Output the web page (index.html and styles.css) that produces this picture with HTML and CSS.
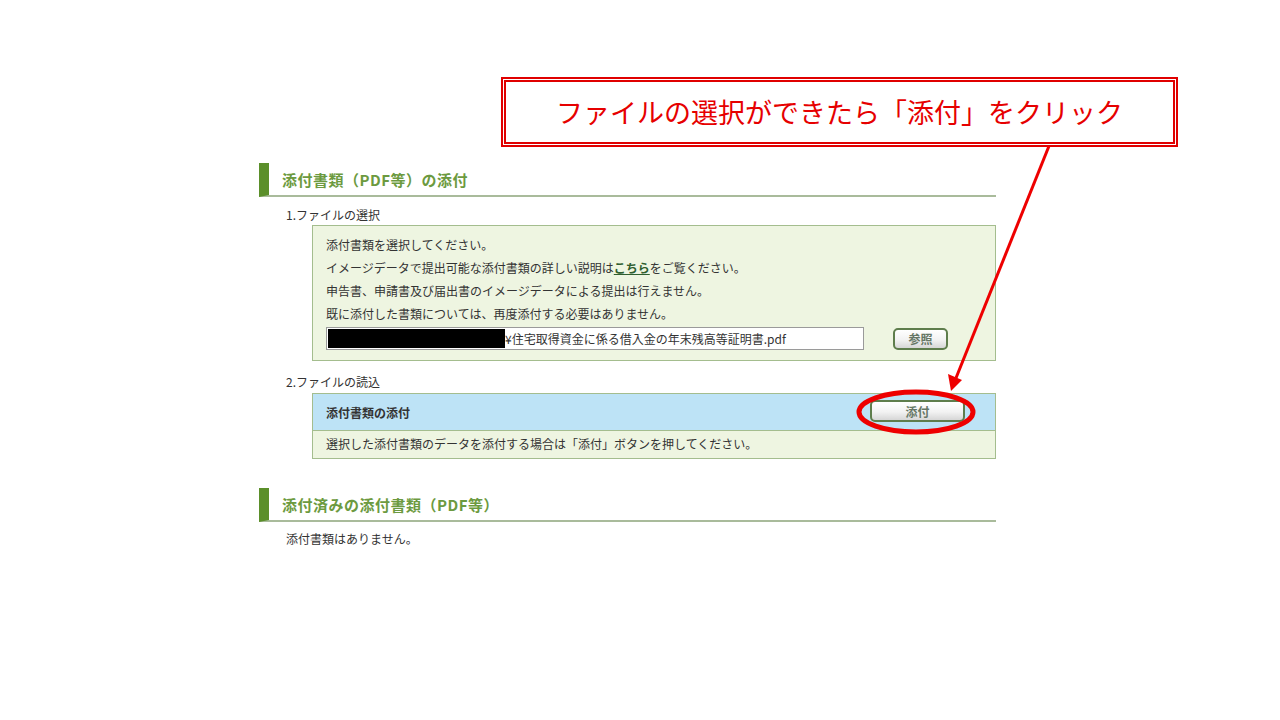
FILE: index.html
```html
<!DOCTYPE html>
<html lang="ja">
  <head>
    <meta charset="utf-8">
    <title>添付書類(PDF等)の添付</title>
    <link rel="stylesheet" href="styles.css">
  </head>
  <body>
    <div class="page">
      <h2 class="section-title">添付書類（PDF等）の添付</h2>
      <div class="step-label">1.ファイルの選択</div>
      <div class="select-box">
        <p>添付書類を選択してください。</p>
        <p>イメージデータで提出可能な添付書類の詳しい説明は<a href="#">こちら</a>をご覧ください。</p>
        <p>申告書、申請書及び届出書のイメージデータによる提出は行えません。</p>
        <p>既に添付した書類については、再度添付する必要はありません。</p>
        <div class="file-row">
          <div class="file-input"><span class="redact"></span>¥住宅取得資金に係る借入金の年末残高等証明書.pdf</div>
          <button class="btn btn-browse">参照</button>
        </div>
      </div>

      <div class="step-label step-two">2.ファイルの読込</div>
      <div class="attach-box">
        <div class="attach-head">
          <span>添付書類の添付</span>
          <button class="btn btn-attach">添付</button>
        </div>
        <div class="attach-note">選択した添付書類のデータを添付する場合は「添付」ボタンを押してください。</div>
      </div>

      <h2 class="section-title section-done">添付済みの添付書類（PDF等）</h2>
      <div class="empty-note">添付書類はありません。</div>
    </div>

    <div class="callout">ファイルの選択ができたら「添付」をクリック</div>

    <svg class="marks" width="1280" height="720" viewBox="0 0 1280 720">
      <line x1="1049" y1="146" x2="956" y2="378" stroke="#ee0000" stroke-width="3"/>
      <polygon points="951,391 948,374 962,380" fill="#ee0000"/>
      <ellipse cx="916" cy="412" rx="57" ry="20" fill="none" stroke="#ee0000" stroke-width="5"/>
    </svg>
  </body>
</html>
```

FILE: styles.css
```css
* {
  box-sizing: border-box;
}

body {
  margin: 0;
  background: #ffffff;
  color: #333333;
  font-family: "Noto Sans CJK JP", "Noto Sans", sans-serif;
  font-size: 12px;
}

.page {
  width: 996px;
  padding: 163px 0 0 259px;
}

.section-title {
  margin: 0;
  height: 34px;
  padding-left: 13px;
  border-left: 10px solid #5b8f2a;
  border-bottom: 2px solid #a9bb9b;
  color: #6c9a40;
  font-size: 15px;
  font-weight: bold;
  letter-spacing: 0.5px;
  line-height: 33px;
}

.step-label {
  margin: 8px 0 0 27px;
  line-height: 20px;
  height: 20px;
}

.step-two {
  margin-top: 11px;
  height: 21px;
}

.select-box {
  margin: 0 0 0 53px;
  padding: 7px 0 10px 13px;
  border: 1px solid #a4bd8e;
  background: #eef5e1;
}

.select-box p {
  margin: 0;
  line-height: 23px;
}

.select-box a {
  color: #2f5e2f;
  font-weight: bold;
  text-decoration: underline;
}

.file-row {
  display: flex;
  align-items: center;
  margin-top: 2px;
}

.file-input {
  display: flex;
  align-items: center;
  width: 538px;
  height: 23px;
  padding: 1px;
  border: 1px solid #9a9a9a;
  background: #ffffff;
  line-height: 20px;
}

.redact {
  width: 177px;
  height: 19px;
  background: #000000;
}

.btn {
  height: 22px;
  padding: 0;
  border: 2px solid #5e7d4c;
  border-radius: 5px;
  background: linear-gradient(#ffffff, #f2f2f2 55%, #d6d6d6);
  color: #667766;
  font-family: "Noto Sans CJK JP", sans-serif;
  font-size: 12px;
  font-weight: bold;
  line-height: 17px;
}

.btn-browse {
  width: 55px;
  margin-left: 29px;
}

.attach-box {
  margin-left: 53px;
  border: 1px solid #a4bd8e;
}

.attach-head {
  display: flex;
  align-items: center;
  justify-content: space-between;
  height: 37px;
  padding: 0 30px 0 13px;
  background: #bde3f6;
  border-bottom: 1px solid #a4bd8e;
  font-weight: bold;
}

.btn-attach {
  width: 95px;
  margin-top: -2px;
}

.attach-note {
  height: 27px;
  padding-left: 13px;
  background: #eef5e1;
  line-height: 25px;
}

.section-done {
  margin-top: 29px;
}

.empty-note {
  margin: 7px 0 0 27px;
  line-height: 20px;
}

.callout {
  position: absolute;
  left: 501px;
  top: 77px;
  width: 677px;
  height: 70px;
  border: 5px double #e00000;
  background: #ffffff;
  color: #e60000;
  font-size: 27px;
  line-height: 60px;
  text-align: center;
}

.marks {
  position: absolute;
  left: 0;
  top: 0;
  pointer-events: none;
}
```
